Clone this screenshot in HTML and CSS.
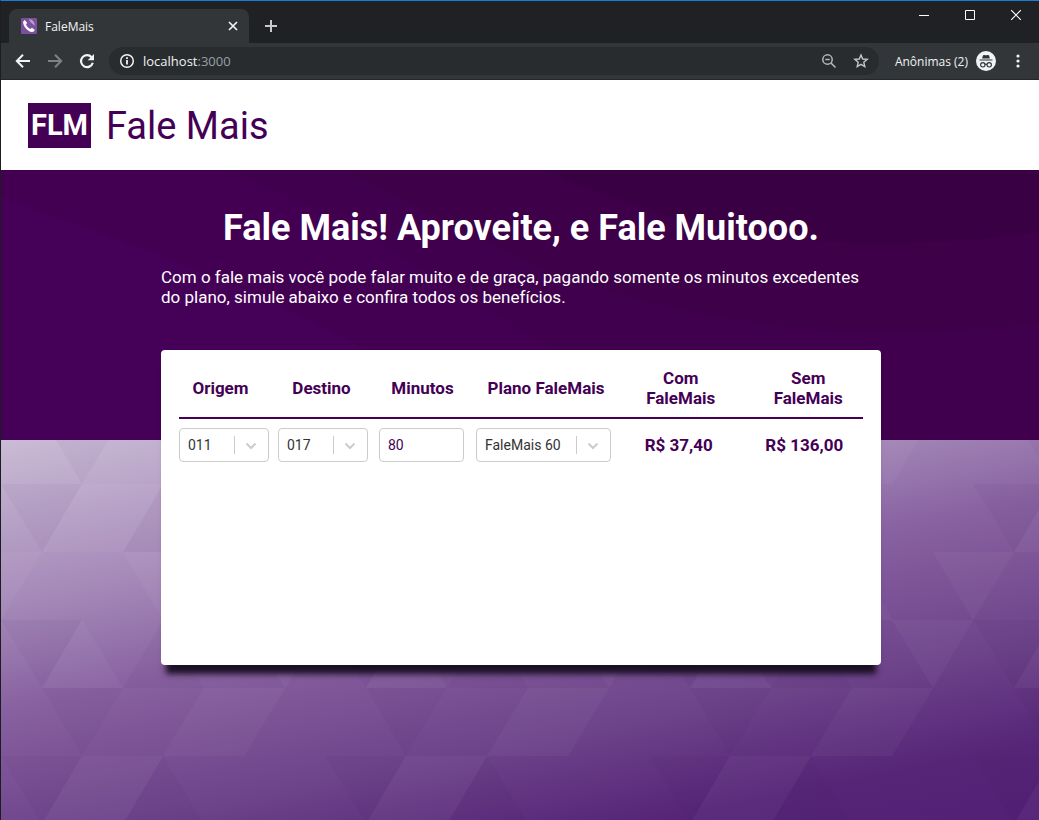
FILE: index.html
```html
<!DOCTYPE html>
<html lang="pt-BR">
<head>
<meta charset="utf-8">
<title>FaleMais</title>
<meta name="viewport" content="width=device-width, initial-scale=1">
<link rel="stylesheet" href="styles.css">
</head>
<body>
<div class="window">
  <div class="tabstrip">
    <div class="tab">
      <svg class="favicon" viewBox="0 0 16 16" aria-hidden="true">
        <rect width="16" height="16" rx="1" fill="#7b519d"/>
        <path d="M3.800 2 2.200 3.400c-.8 3.900 4.300 10.200 8.800 10.600 1.300 0 2.500-.9 2.800-2L11 9.800 9.300 11C7.400 10.300 5.500 8 5 6.200L6.200 5z" fill="#fff"/>
        <path d="M8 1.300c3-.3 5.700 2.500 5.800 6.200-1.200-.6-2.200-1.200-3-2.200C9.600 4.200 8.300 2.900 8 1.300z" fill="#b79fc9"/>
      </svg>
      <span class="tab-title">FaleMais</span>
      <button class="icon-btn tab-close" aria-label="Fechar guia">
        <svg width="16" height="16" viewBox="0 0 16 16"><path d="M4 4l8 8M12 4l-8 8" stroke="#f1f3f4" stroke-width="1.700" fill="none"/></svg>
      </button>
    </div>
    <button class="icon-btn new-tab" aria-label="Nova guia">
      <svg width="16" height="16" viewBox="0 0 16 16"><path d="M8 2v12M2 8h12" stroke="#c8cacd" stroke-width="2" fill="none"/></svg>
    </button>
    <div class="window-controls">
      <button class="icon-btn control" aria-label="Minimizar"><svg width="10" height="10" viewBox="0 0 10 10"><path d="M0 5.500h10" stroke="#fff"/></svg></button>
      <button class="icon-btn control" aria-label="Maximizar"><svg width="10" height="10" viewBox="0 0 10 10"><path d="M.5.5h9v9h-9z" stroke="#fff" fill="none"/></svg></button>
      <button class="icon-btn control" aria-label="Fechar"><svg width="10" height="10" viewBox="0 0 10 10"><path d="M0 0l10 10M10 0L0 10" stroke="#fff" stroke-width="1.200"/></svg></button>
    </div>
  </div>

  <div class="toolbar">
    <button class="icon-btn nav" aria-label="Voltar"><svg width="16" height="16" viewBox="0 0 16 16"><path d="M15 8H2.500M8 1.800 1.800 8 8 14.200" stroke="#f1f3f4" stroke-width="2" fill="none"/></svg></button>
    <button class="icon-btn nav" aria-label="Avançar"><svg width="16" height="16" viewBox="0 0 16 16"><path d="M1 8h12.500M8 1.800 14.200 8 8 14.200" stroke="#7f8285" stroke-width="2" fill="none"/></svg></button>
    <button class="icon-btn nav" aria-label="Recarregar"><svg width="16" height="16" viewBox="0 0 16 16"><path d="M12.600 4.200A6 6 0 1 0 13.800 9.800" stroke="#f1f3f4" stroke-width="2.200" fill="none"/><path d="M15 1v6.300H8.700z" fill="#f1f3f4"/></svg></button>
    <div class="omnibox">
      <svg width="16" height="16" viewBox="0 0 16 16" aria-hidden="true"><circle cx="8" cy="8" r="6.300" stroke="#f1f3f4" stroke-width="1.500" fill="none"/><path d="M8 7v4.500M8 4.300V6" stroke="#f1f3f4" stroke-width="1.800"/></svg>
      <span class="url">localhost<span class="port">:3000</span></span>
      <button class="icon-btn" aria-label="Zoom"><svg width="16" height="16" viewBox="0 0 16 16"><circle cx="6.500" cy="6.500" r="4.700" stroke="#b4b7ba" stroke-width="1.500" fill="none"/><path d="M10 10l4.500 4.500M4.300 6.500h4.400" stroke="#b4b7ba" stroke-width="1.600"/></svg></button>
      <button class="icon-btn" aria-label="Favoritar"><svg width="16" height="16" viewBox="0 0 16 16"><path d="M8 2l1.700 4 4.500.4-3.400 2.900 1 4.300L8 11.300l-3.800 2.300 1-4.300L1.800 6.400 6.300 6z" stroke="#c4c7ca" stroke-width="1.400" fill="none"/></svg></button>
    </div>
    <span class="incognito-label">Anônimas (2)</span>
    <svg class="incognito" viewBox="0 0 20 20" aria-hidden="true">
      <circle cx="10" cy="10" r="10" fill="#f1f3f4"/>
      <path d="M7 4.200 9 4l1 .4L11 4l2 .2.900 3.300H6.100zM3.500 8.500h13v1.100h-13z" fill="#303336"/>
      <g fill="none" stroke="#303336" stroke-width="1.100"><circle cx="6.800" cy="13.800" r="2.200"/><circle cx="13.200" cy="13.800" r="2.200"/><path d="M9 13.500q1-.7 2 0"/></g>
    </svg>
    <button class="icon-btn menu" aria-label="Menu"><svg width="16" height="16" viewBox="0 0 16 16" fill="#f1f3f4"><circle cx="8" cy="3" r="1.600"/><circle cx="8" cy="8" r="1.600"/><circle cx="8" cy="13" r="1.600"/></svg></button>
  </div>

  <div class="page">
    <header class="site-header">
      <span class="logo">FLM</span>
      <span class="brand">Fale Mais</span>
    </header>

    <main class="main">
      <div class="backdrop">
        <svg class="waves" viewBox="0 0 1038 270" preserveAspectRatio="xMinYMin slice" aria-hidden="true">
          <rect width="1038" height="270" fill="#450057"/>
          <path d="M0 27Q150 80 240 118T420 215Q470 245 500 270H1038V0H0z" fill="#430053"/>
          <path d="M224 0Q290 25 350 58T520 160Q620 230 700 270H1038V0z" fill="#40004e"/>
          <path d="M340 0Q470 65 530 95 720 165 900 162 980 161 1038 153V0z" fill="#3d0049"/>
          <path d="M543 0Q600 25 661 45 780 75 894 73 980 71 1038 62V0z" fill="#3a0044"/>
        </svg>
        <svg class="triangles" viewBox="0 0 1038 380" preserveAspectRatio="xMinYMin slice" aria-hidden="true">
          <defs>
            <linearGradient id="fade" gradientUnits="userSpaceOnUse" x1="0" y1="0" x2="113" y2="565">
              <stop offset="0" stop-color="#cabbd5"/>
              <stop offset=".3" stop-color="#a285b6"/>
              <stop offset=".46" stop-color="#8861a0"/>
              <stop offset=".7" stop-color="#6c4289"/>
              <stop offset=".87" stop-color="#562577"/>
              <stop offset="1" stop-color="#522076"/>
            </linearGradient>
            <pattern id="tiles" width="324" height="272" patternUnits="userSpaceOnUse" y="44">
              <g fill="#fff" fill-opacity=".03">
                <path d="M81 0h81l-40 68H41z"/>
                <path d="M0 68h41L0 136zM284 68h40v68z"/>
                <path d="M122 68h81l-41 68z"/>
                <path d="M81 136l41 68H41z"/>
                <path d="M203 68l41 68h-82z"/>
                <path d="M243 136h81l-40 68z"/>
                <path d="M203 204h81l-41 68h-81z"/>
              </g>
              <g fill="#2a0a45" fill-opacity=".035">
                <path d="M0 0h81L41 68z"/>
                <path d="M162 0l41 68h-81z"/>
                <path d="M0 136h81l-40 68z"/>
                <path d="M162 136l41 68h-81z"/>
                <path d="M41 204h81l-41 68z"/>
              </g>
            </pattern>
          </defs>
          <rect width="1038" height="380" fill="url(#fade)"/>
          <rect width="1038" height="380" fill="url(#tiles)"/>
        </svg>
      </div>

      <div class="content">
        <h1 class="title">Fale Mais! Aproveite, e Fale Muitooo.</h1>
        <p class="lead">Com o fale mais você pode falar muito e de graça, pagando somente os minutos excedentes do plano, simule abaixo e confira todos os benefícios.</p>

        <section class="card">
          <table class="simulator">
            <colgroup><col class="col-code"><col class="col-code"><col class="col-code"><col class="col-plan"><col><col></colgroup>
            <thead>
              <tr>
                <th scope="col" class="th-origin">Origem</th>
                <th scope="col" class="th-destination">Destino</th>
                <th scope="col" class="th-minutes">Minutos</th>
                <th scope="col" class="th-plan">Plano FaleMais</th>
                <th scope="col">Com<br>FaleMais</th>
                <th scope="col" class="th-without">Sem<br>FaleMais</th>
              </tr>
            </thead>
            <tbody>
              <tr>
                <td><span class="select"><select aria-label="Origem"><option>011</option></select><svg class="chevron" viewBox="0 0 12 8"><path d="M1.500 1.500 6 6l4.500-4.500" /></svg></span></td>
                <td><span class="select"><select aria-label="Destino"><option>017</option></select><svg class="chevron" viewBox="0 0 12 8"><path d="M1.500 1.500 6 6l4.500-4.500" /></svg></span></td>
                <td class="cell-minutes"><input class="minutes" type="text" inputmode="numeric" aria-label="Minutos" value="80"></td>
                <td><span class="select"><select aria-label="Plano FaleMais"><option>FaleMais 60</option></select><svg class="chevron" viewBox="0 0 12 8"><path d="M1.500 1.500 6 6l4.500-4.500" /></svg></span></td>
                <td class="price price-with">R$ 37,40</td>
                <td class="price price-without">R$ 136,00</td>
              </tr>
            </tbody>
          </table>
        </section>
      </div>
    </main>
  </div>
</div>
</body>
</html>
```

FILE: styles.css
```css
* {
  box-sizing: border-box;
}

body {
  margin: 0;
  font-family: Roboto, "Liberation Sans", sans-serif;
  color: #440055;
}

.window {
  display: flex;
  flex-direction: column;
  min-height: 100vh;
  border-top: 1px solid #1a7fd4;
  border-left: 1px solid #1c1d20;
  background: #202124;
}

.icon-btn {
  display: flex;
  align-items: center;
  justify-content: center;
  flex: none;
  padding: 0;
  border: 0;
  background: none;
}

.icon-btn svg {
  display: block;
}

/* Browser frame */
.tabstrip {
  display: flex;
  align-items: flex-end;
  height: 42px;
  padding-left: 8px;
  font-family: "Open Sans", "Noto Sans", sans-serif;
}

.tab {
  display: flex;
  align-items: center;
  gap: 8px;
  width: 240px;
  height: 34px;
  padding: 0 8px 0 12px;
  border-radius: 8px 8px 0 0;
  background: #323639;
  color: #f1f3f4;
  font-size: 12px;
}

.favicon {
  width: 16px;
  height: 16px;
}

.tab-title {
  flex: 1;
}

.new-tab {
  width: 28px;
  height: 28px;
  margin: 0 0 3px 8px;
}

.window-controls {
  display: flex;
  align-self: flex-start;
  margin-left: auto;
}

.control {
  width: 46px;
  height: 28px;
}

.toolbar {
  display: flex;
  align-items: center;
  gap: 16px;
  height: 37px;
  padding: 0 13px 0 14px;
  border-bottom: 1px solid #25282b;
  background: #323639;
  color: #f1f3f4;
  font-family: "Open Sans", "Noto Sans", sans-serif;
  font-size: 12px;
}

.omnibox {
  display: flex;
  align-items: center;
  flex: 1;
  gap: 16px;
  height: 28px;
  margin-left: -2px;
  padding: 0 10px;
  border-radius: 14px;
  background: #282c2f;
  font-size: 13px;
}

.url {
  flex: 1;
  margin-left: -8px;
}

.port {
  color: #9aa0a6;
}

.incognito {
  width: 20px;
  height: 20px;
  margin: 0 -2px 0 -8px;
}

/* Page */
.page {
  display: flex;
  flex: 1;
  flex-direction: column;
}

.site-header {
  display: flex;
  align-items: center;
  gap: 15px;
  height: 90px;
  padding: 0 27px;
  background: #fff;
}

.logo {
  padding: 0 3px;
  background: #440055;
  color: #fff;
  font-size: 29px;
  font-weight: 700;
  line-height: 45px;
}

.brand {
  padding-top: 2px;
  font-size: 38px;
  font-weight: 400;
  line-height: 46px;
}

.main {
  position: relative;
  flex: 1;
  padding: 37px 16px 155px 18px;
}

.backdrop {
  position: absolute;
  inset: 0;
  display: flex;
  flex-direction: column;
  overflow: hidden;
}

.waves {
  flex: none;
  width: 100%;
  height: 270px;
}

.triangles {
  flex: 1;
  width: 100%;
  min-height: 0;
}

.content {
  position: relative;
  max-width: 720px;
  margin: 0 auto;
}

.title {
  margin: 0;
  color: #fff;
  font-size: 36px;
  line-height: 43px;
  text-align: center;
}

.lead {
  margin: 17px 0 43px;
  color: #fff;
  font-size: 17px;
  font-weight: 400;
  line-height: 20px;
}

.card {
  min-height: 315px;
  padding: 9px 18px;
  border-radius: 4px;
  background: #fff;
  box-shadow: 0 14px 6px -5px #1a1024;
}

.simulator {
  width: 100%;
  border-collapse: collapse;
  table-layout: fixed;
}

.col-code {
  width: 99px;
}

.col-plan {
  width: 144px;
}

th {
  padding: 9px 0;
  border-bottom: 2px solid #440055;
  font-size: 17px;
  font-weight: 700;
  line-height: 20px;
}

.th-origin {
  padding-right: 16px;
}

.th-destination {
  padding-right: 12px;
}

.th-minutes {
  padding-right: 8px;
}

.th-plan {
  padding-right: 4px;
}

.th-without {
  padding-left: 12px;
}

td {
  padding: 9px 9px 0 0;
}

.select {
  position: relative;
  display: block;
}

.select select,
.minutes {
  display: block;
  width: 100%;
  height: 34px;
  padding: 0 8px;
  border: 1px solid #ccc;
  border-radius: 4px;
  background: #fff;
  color: #333;
  font-family: inherit;
  font-size: 14px;
  appearance: none;
}

.cell-minutes {
  padding-left: 2px;
  padding-right: 12px;
}

.minutes {
  color: #440055;
}

.select::after {
  content: "";
  position: absolute;
  top: 8px;
  right: 34px;
  width: 1px;
  height: 18px;
  background: #ccc;
}

.chevron {
  position: absolute;
  top: 14px;
  right: 12px;
  width: 12px;
  height: 8px;
  fill: none;
  stroke: #ccc;
  stroke-width: 2;
  pointer-events: none;
}

.price {
  font-size: 17px;
  font-weight: 700;
  text-align: center;
}

.price-with {
  padding-right: 4px;
}

.price-without {
  padding-right: 0;
  padding-left: 4px;
}
```
